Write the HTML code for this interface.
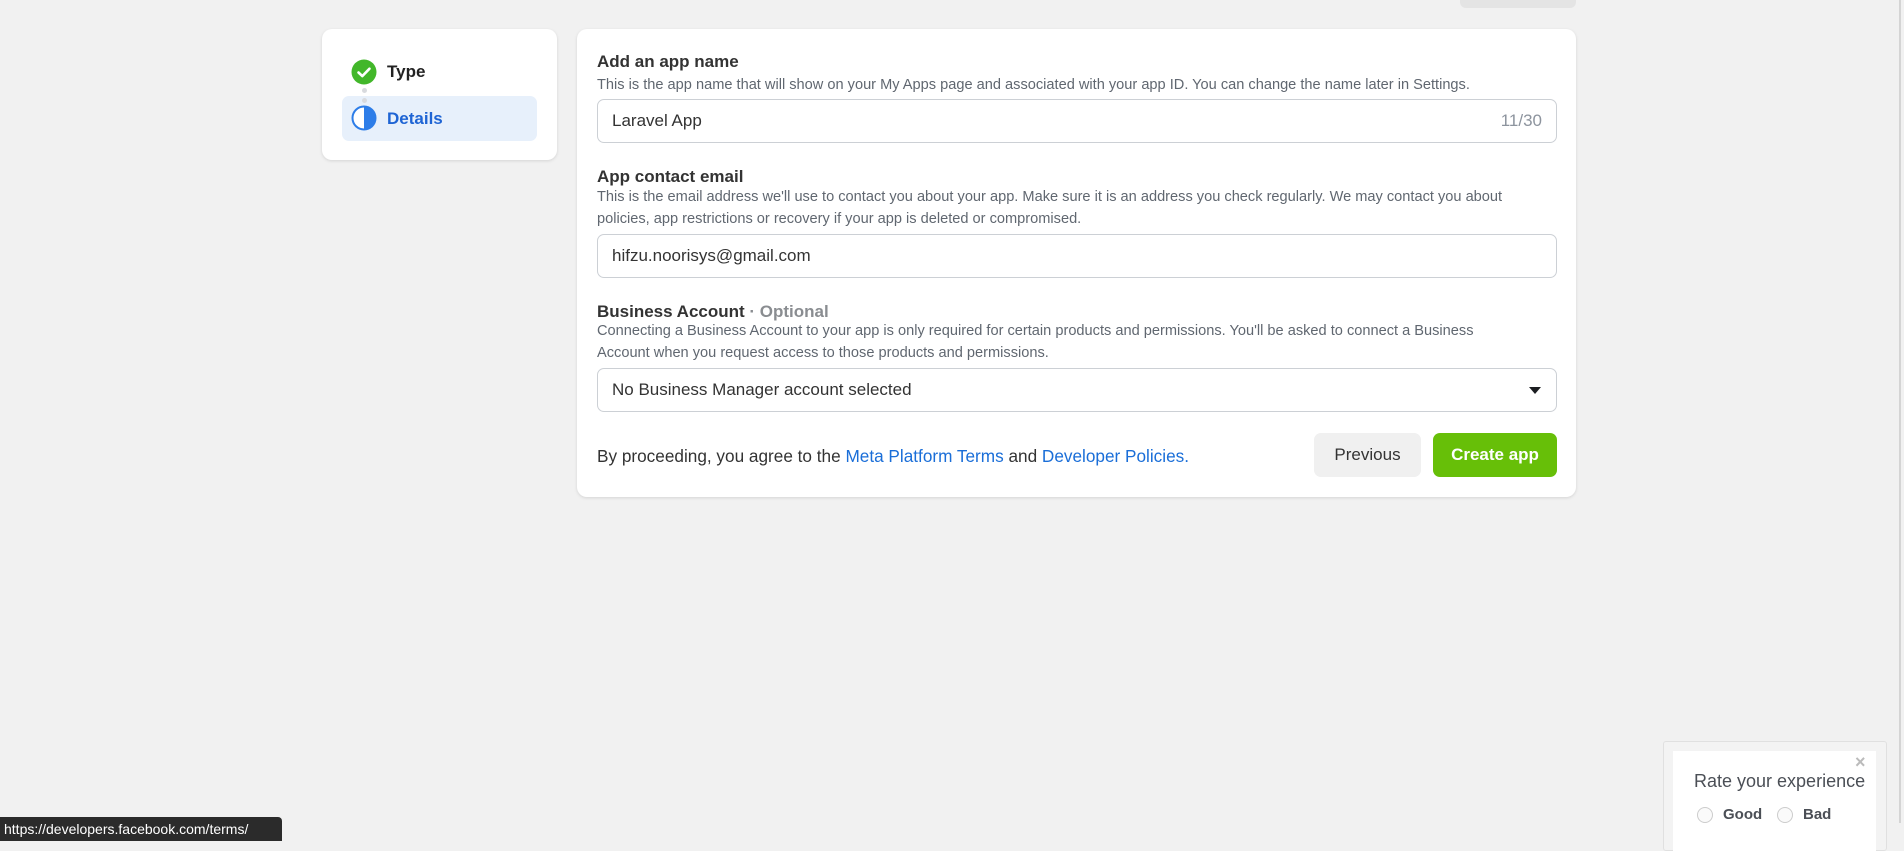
<!DOCTYPE html>
<html><head><meta charset="utf-8"><style>
*{box-sizing:border-box;margin:0;padding:0}
body{width:1904px;height:841px;background:#f1f1f1;font-family:"Liberation Sans",Arial,sans-serif;position:relative;overflow:hidden;color:#1c1e21}
.a{position:absolute;white-space:nowrap}
.card{position:absolute;background:#fff;border-radius:10px;box-shadow:0 1px 3px rgba(0,0,0,.12)}
.t{font-size:17px;font-weight:bold;color:#333}
.d{font-size:14.6px;color:#606770;line-height:22px}
.inp{position:absolute;left:597px;width:960px;height:44px;border:1px solid #ccd0d5;border-radius:7px;background:#fff;font-size:17px;color:#333;padding:0 14px;line-height:42px}
</style></head><body>
<div class="a" style="left:1460px;top:0;width:116px;height:8px;background:#e4e4e4;border-radius:0 0 6px 6px"></div>
<div class="a" style="left:1899px;top:0;width:2px;height:823px;background:#d4d4d4"></div>

<div class="card" style="left:322px;top:29px;width:235px;height:131px"></div>
<div class="a" style="left:342px;top:96px;width:195px;height:45px;background:#e7f0fb;border-radius:7px"></div>
<svg class="a" style="left:351px;top:59px" width="26" height="26" viewBox="0 0 26 26"><circle cx="13" cy="13" r="12.5" fill="#42b72a"/><path d="M7.5 13.5l3.8 3.6 7.2-7.4" stroke="#fff" stroke-width="2.6" fill="none" stroke-linecap="round" stroke-linejoin="round"/></svg>
<div class="a" style="left:362px;top:88px;width:5px;height:5px;border-radius:50%;background:#d8dade"></div>
<div class="a" style="left:362px;top:98px;width:5px;height:5px;border-radius:50%;background:#d8dade"></div>
<svg class="a" style="left:351px;top:105px" width="26" height="26" viewBox="0 0 26 26"><circle cx="13" cy="13" r="11.5" fill="#fff" stroke="#2d7de8" stroke-width="2"/><path d="M13 1.5a11.5 11.5 0 0 1 0 23z" fill="#2d7de8"/></svg>
<div class="a" style="left:387px;top:62px;font-size:17px;font-weight:bold;color:#222">Type</div>
<div class="a" style="left:387px;top:109px;font-size:17px;font-weight:bold;color:#1e64d4">Details</div>

<div class="card" style="left:577px;top:29px;width:999px;height:468px"></div>
<div class="a t" style="left:597px;top:52px">Add an app name</div>
<div class="a d" style="left:597px;top:74px">This is the app name that will show on your My Apps page and associated with your app ID. You can change the name later in Settings.</div>
<div class="inp" style="top:99px">Laravel App<span style="position:absolute;right:14px;color:#8d949e">11/30</span></div>

<div class="a t" style="left:597px;top:167px">App contact email</div>
<div class="a d" style="left:597px;top:186px">This is the email address we'll use to contact you about your app. Make sure it is an address you check regularly. We may contact you about<br>policies, app restrictions or recovery if your app is deleted or compromised.</div>
<div class="inp" style="top:234px">hifzu.noorisys@gmail.com</div>

<div class="a t" style="left:597px;top:302px">Business Account <span style="color:#8a8d91">· Optional</span></div>
<div class="a d" style="left:597px;top:320px">Connecting a Business Account to your app is only required for certain products and permissions. You'll be asked to connect a Business<br>Account when you request access to those products and permissions.</div>
<div class="inp" style="top:368px">No Business Manager account selected<svg style="position:absolute;right:14px;top:17px" width="14" height="9" viewBox="0 0 14 9"><path d="M1 1h12L7 8z" fill="#1c1e21"/></svg></div>

<div class="a" style="left:597px;top:446px;font-size:17.2px;color:#333">By proceeding, you agree to the <span style="color:#1a6ed8">Meta Platform Terms</span> and <span style="color:#1a6ed8">Developer Policies.</span></div>
<div class="a" style="left:1314px;top:433px;width:107px;height:44px;background:#f0f0f0;border-radius:7px;font-size:17px;color:#333;text-align:center;line-height:44px">Previous</div>
<div class="a" style="left:1433px;top:433px;width:124px;height:44px;background:#67bf08;border-radius:7px;font-size:17px;font-weight:bold;color:#fff;text-align:center;line-height:44px">Create app</div>

<div class="a" style="left:1663px;top:741px;width:224px;height:110px;background:#f3f3f3;border:1px solid #e0e0e0;border-radius:3px"></div>
<div class="a" style="left:1673px;top:751px;width:203px;height:100px;background:#fff"></div>
<div class="a" style="left:1855px;top:752px;font-size:18px;color:#bbb;font-weight:bold">×</div>
<div class="a" style="left:1694px;top:771px;font-size:18px;color:#4b4f56">Rate your experience</div>
<div class="a" style="left:1697px;top:807px;width:16px;height:16px;border-radius:50%;border:1px solid #ccc;background:#fafafa"></div>
<div class="a" style="left:1723px;top:806px;font-size:15px;font-weight:bold;color:#4b4f56">Good</div>
<div class="a" style="left:1777px;top:807px;width:16px;height:16px;border-radius:50%;border:1px solid #ccc;background:#fafafa"></div>
<div class="a" style="left:1803px;top:806px;font-size:15px;font-weight:bold;color:#4b4f56">Bad</div>

<div class="a" style="left:0;top:817px;width:282px;height:24px;background:#2b2b2b;border-radius:0 4px 0 0;color:#fff;font-size:14px;line-height:24px;padding-left:4px">https://developers.facebook.com/terms/</div>
</body></html>
